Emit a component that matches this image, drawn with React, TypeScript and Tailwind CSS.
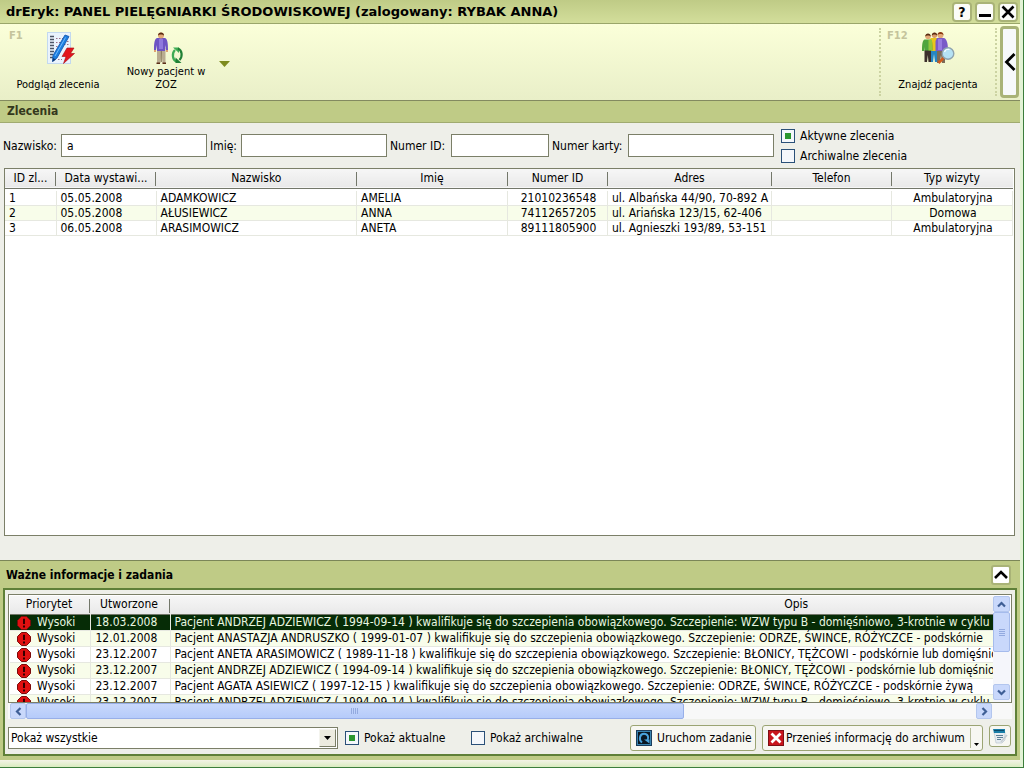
import type { ReactNode } from "react";
import { useState } from "react";

const orders = [
  { id: 1, date: "05.05.2008", last: "ADAMKOWICZ", first: "AMELIA", pesel: "21010236548", address: "ul. Albańska 44/90, 70-892 A", phone: "", visit: "Ambulatoryjna" },
  { id: 2, date: "05.05.2008", last: "AŁUSIEWICZ", first: "ANNA", pesel: "74112657205", address: "ul. Ariańska 123/15, 62-406", phone: "", visit: "Domowa" },
  { id: 3, date: "06.05.2008", last: "ARASIMOWICZ", first: "ANETA", pesel: "89111805900", address: "ul. Agnieszki 193/89, 53-151", phone: "", visit: "Ambulatoryjna" },
];

const orderColumns = [
  { label: "ID zl...", width: "w-[51px]" },
  { label: "Data wystawi...", width: "w-[100px]" },
  { label: "Nazwisko", width: "" },
  { label: "Imię", width: "w-[151px]" },
  { label: "Numer ID", width: "w-[100px]" },
  { label: "Adres", width: "w-[164px]" },
  { label: "Telefon", width: "w-[120px]" },
  { label: "Typ wizyty", width: "w-[121px]" },
];

const tasks = [
  { date: "18.03.2008", text: "Pacjent ANDRZEJ ADZIEWICZ ( 1994-09-14 ) kwalifikuje się do szczepienia obowiązkowego. Szczepienie: WZW typu B - domięśniowo, 3-krotnie w cyklu" },
  { date: "12.01.2008", text: "Pacjent ANASTAZJA ANDRUSZKO ( 1999-01-07 ) kwalifikuje się do szczepienia obowiązkowego. Szczepienie: ODRZE, ŚWINCE, RÓŻYCZCE - podskórnie" },
  { date: "23.12.2007", text: "Pacjent ANETA ARASIMOWICZ ( 1989-11-18 ) kwalifikuje się do szczepienia obowiązkowego. Szczepienie: BŁONICY, TĘŻCOWI - podskórnie lub domięśniowo" },
  { date: "23.12.2007", text: "Pacjent ANDRZEJ ADZIEWICZ ( 1994-09-14 ) kwalifikuje się do szczepienia obowiązkowego. Szczepienie: BŁONICY, TĘŻCOWI - podskórnie lub domięśniowo" },
  { date: "23.12.2007", text: "Pacjent AGATA ASIEWICZ ( 1997-12-15 ) kwalifikuje się do szczepienia obowiązkowego. Szczepienie: ODRZE, ŚWINCE, RÓŻYCZCE - podskórnie żywą" },
  { date: "23.12.2007", text: "Pacjent ANDRZEJ ADZIEWICZ ( 1994-09-14 ) kwalifikuje się do szczepienia obowiązkowego. Szczepienie: WZW typu B - domięśniowo, 3-krotnie w cyklu" },
];

function OrderIcon() {
  return (
    <svg width="34" height="32" viewBox="-6 0 34 32" aria-hidden="true">
      <rect x="0.5" y="0.5" width="23" height="31" fill="#eaf3fd" stroke="#c3d9ef" />
      <path d="M3 4.5h4M3 7.5h4M3 10.5h4M3 13.5h4M3 16.5h4M3 19.5h4M3 22.5h3M3 25.5h3" stroke="#4c5566" strokeWidth="1.4" />
      <path d="M9 6.500h7M9 10.500h5M9 14.500h4M17 12.500h5M17 9.500h5M11 27.500h4" stroke="#9a6f86" strokeDasharray="1.5 1.5" />
      <path d="M18 3l4 1.500L10 26l-4.500 3.500.5-6z" fill="#1d7fe0" stroke="#0c4fa8" strokeWidth="0.8" />
      <path d="M18.500 5.500L8 24" stroke="#7cc0ff" strokeWidth="0.9" />
      <path d="M6 26l-.5 4 3.500-2.500z" fill="#123a73" />
      <path d="M20 16h7l-3.500 5.500h4L16.500 31.500l2.500-7h-4z" fill="#e3141c" stroke="#a40a10" strokeWidth="0.6" />
    </svg>
  );
}

function NewPatientIcon() {
  return (
    <svg width="36" height="32" viewBox="-6 0 36 32" aria-hidden="true">
      <path d="M3 16h8.500v15H8.500L7.500 21l-1 10H3z" fill="#b9ac90" />
      <path d="M7.300 19v11" stroke="#857758" />
      <path d="M2.500 31.300H6M8.500 31.300H12" stroke="#5b2d18" strokeWidth="1.400" />
      <path d="M3 6h8c2.500 1 3 5 3 12h-2l-1-5v6H3v-6l-1 5H0C0 11 .5 7 3 6z" fill="#6d54c4" />
      <path d="M5 7h4v10H5z" fill="#8e78dd" />
      <path d="M0 18h2v2H0zM12 18h2v2h-2z" fill="#e0a070" />
      <circle cx="7" cy="3.500" r="3" fill="#e2a877" />
      <path d="M4 3.500C4-.5 10-.5 10 3.500 9 2 5 2 4 3.500z" fill="#5a2a12" />
      <path d="M22.500 29.500c-4-1.500-5-8-1.500-11.500" fill="none" stroke="#3dab54" strokeWidth="2.200" />
      <path d="M19 15.500h6v5.500z" fill="#3dab54" />
      <path d="M24 16.500c4 1.500 5 8 1.500 11.500" fill="none" stroke="#1f7f35" strokeWidth="2.200" />
      <path d="M27.500 31h-6v-5.500z" fill="#1f7f35" />
    </svg>
  );
}

function FindPatientIcon() {
  return (
    <svg width="33" height="32" viewBox="0 0 33 32" aria-hidden="true">
      <path d="M8 17h7l.500 13H13l-1-8-1 8H8z" fill="#2586c4" />
      <path d="M8.500 6h7c2 1 3 6 3 13H8z" fill="#e9c61c" />
      <circle cx="12.500" cy="3.300" r="2.600" fill="#d99b6a" />
      <path d="M9.800 3.500c0-4 5.400-4 5.400 0-1-1.500-4.400-1.500-5.400 0z" fill="#5a2a12" />
      <path d="M2.500 18h6.500v12H6.500l-.700-7-.800 7H2.500z" fill="#3c2f2b" />
      <path d="M2.500 7.500H9c1.500 1 1.500 5 1.500 11h-8v-3.500L2 19H0C0 12 .5 8.500 2.500 7.500z" fill="#4fa53d" />
      <path d="M6.500 8H10v10.500H6.500z" fill="#92c63d" />
      <circle cx="6" cy="4.600" r="2.700" fill="#e2a877" />
      <path d="M3.200 4.600c0-4 5.600-4 5.600 0-1-1.500-4.600-1.500-5.600 0z" fill="#5a2a12" />
      <path d="M15 17h8v14h-3l-1-8-1 8h-3z" fill="#7b6a58" />
      <path d="M15 6h7c3 1 4 6 4 12h-3v1h-9.500V9z" fill="#7a5bc8" />
      <path d="M16 7h4v11h-4z" fill="#977ce0" />
      <circle cx="18.500" cy="3.200" r="2.900" fill="#e2a877" />
      <path d="M15.500 3.200c0-4.200 6-4.200 6 0-1-1.500-5-1.500-6 0z" fill="#8a3a12" />
      <path d="M21.500 26L16.500 31" stroke="#d05a1c" strokeWidth="2.600" />
      <circle cx="26" cy="21.500" r="5.800" fill="#b5e1f4" stroke="#8fa3ae" strokeWidth="1.400" />
      <path d="M22.500 20a4 4 0 0 1 5-2.500" fill="none" stroke="#fff" strokeWidth="1.200" />
    </svg>
  );
}

function PriorityIcon() {
  return (
    <svg width="14" height="14" viewBox="0 0 14 14" aria-hidden="true">
      <path d="M4.500.5h5l4 4v5l-4 4h-5l-4-4v-5z" fill="#e01010" stroke="#7a0b0b" />
      <path d="M7 2.800v5.200" stroke="#300" strokeWidth="2" />
      <path d="M6 9.500h2v2H6z" fill="#300" />
    </svg>
  );
}

function RunIcon() {
  return (
    <svg width="16" height="16" viewBox="0 0 16 16" aria-hidden="true">
      <rect x="0.500" y="0.500" width="15" height="15" fill="#3a84b0" stroke="#1c3d5c" />
      <rect x="2" y="2" width="12" height="12" fill="#0a1722" />
      <path d="M6 12.500C2.500 10 3.500 3.800 8 3.800c4 0 5.300 4 3.200 6.700" fill="none" stroke="#4aa3dc" strokeWidth="2" />
      <path d="M8 9.500h5.500v4z" fill="#4aa3dc" />
    </svg>
  );
}

function ArchiveIcon() {
  return (
    <svg width="16" height="16" viewBox="0 0 16 16" aria-hidden="true">
      <rect x="0.500" y="0.500" width="15" height="15" fill="#c8141c" stroke="#7d0f14" />
      <path d="M3.500 3.500l9 9M12.500 3.500l-9 9" stroke="#fff" strokeWidth="2.800" />
    </svg>
  );
}

function NotesIcon() {
  return (
    <svg width="16" height="16" viewBox="0 0 16 16" aria-hidden="true">
      <path d="M2 4h11v8l-3 3H4z" fill="#e6ecf1" stroke="#b4c0ca" strokeWidth="0.600" />
      <path d="M1 1h12v4H2z" fill="#1a7ea8" />
      <path d="M2 2.500h10" stroke="#0c4b6c" />
      <path d="M4 7.500h7M5 9.500h6M5 11.500h4" stroke="#5d7f96" />
      <path d="M15 7l-6 7" stroke="#c7cdd2" strokeWidth="1.800" />
    </svg>
  );
}

function Chevron({ d }: { d: string }) {
  return (
    <svg width="9" height="9" viewBox="0 0 9 9" aria-hidden="true">
      <path d={d} fill="none" stroke="#3f5f96" strokeWidth="2.200" />
    </svg>
  );
}

function WindowButton({ label, children }: { label: string; children: ReactNode }) {
  return (
    <button
      aria-label={label}
      className="flex h-5 w-5 items-center justify-center rounded-[4px] border-2 border-[#a9b377] bg-[#fbfcf8] text-sm leading-none font-bold"
    >
      {children}
    </button>
  );
}

function ToolButton({ icon, label, hotkey, width }: { icon: ReactNode; label: string; hotkey?: string; width: string }) {
  return (
    <button className={`relative flex flex-col items-center pt-2 ${width}`}>
      {hotkey && (
        <span className="absolute top-1.5 left-1.5 font-['DejaVu_Sans'] text-[10px] leading-3 font-bold text-[#c5c49c]">{hotkey}</span>
      )}
      {icon}
      <span className="flex h-[27px] w-full items-end justify-center px-3 text-center text-[11px] leading-[13px]">{label}</span>
    </button>
  );
}

function Field({ id, label, labelWidth, inputWidth, value }: { id: string; label: string; labelWidth: string; inputWidth: string; value?: string }) {
  return (
    <div className="flex items-center">
      <label htmlFor={id} className={`whitespace-nowrap ${labelWidth}`}>{label}</label>
      <input
        id={id}
        type="text"
        defaultValue={value}
        className={`h-[23px] border border-[#7b7f68] bg-white px-[5px] outline-none ${inputWidth}`}
      />
    </div>
  );
}

function Check({ label, checked }: { label: string; checked?: boolean }) {
  return (
    <label className="flex items-center gap-[5px] whitespace-nowrap">
      <input
        type="checkbox"
        defaultChecked={checked}
        className="h-3.5 w-3.5 appearance-none border border-[#2a5078] bg-[#f4f7fb] bg-[length:6px_6px] bg-center bg-no-repeat checked:bg-[linear-gradient(#2b962f,#2b962f)]"
      />
      {label}
    </label>
  );
}

const scrollButton = "flex shrink-0 items-center justify-center rounded-[2px] border border-[#b3c6ee] bg-[#c9d8fb]";
const headCell = "relative p-0 text-center font-normal after:absolute after:top-[3px] after:right-0 after:h-[14px] after:w-px after:bg-[#73776a] last:after:hidden";

export default function App() {
  const [selected, setSelected] = useState(0);

  return (
    <div className="flex min-h-screen flex-col overflow-hidden border-r border-b border-[#3c7d3c] bg-[#e3f3d6] pr-[3px] font-['DejaVu_Sans_Condensed','Noto_Sans',sans-serif] text-xs text-black">
      {/* Title bar */}
      <header className="flex h-6 items-center justify-between border-b border-[#9aa66a] bg-gradient-to-b from-[#bfcb86] to-[#d3de9b] pr-0.5 pl-1.5">
        <h1 className="font-['DejaVu_Sans'] text-[13px] leading-5 font-bold whitespace-nowrap">drEryk: PANEL PIELĘGNIARKI ŚRODOWISKOWEJ (zalogowany: RYBAK ANNA)</h1>
        <div className="flex gap-[3px]">
          <WindowButton label="Pomoc">?</WindowButton>
          <WindowButton label="Minimalizuj">
            <span className="mt-2 h-[3px] w-3 bg-black" />
          </WindowButton>
          <WindowButton label="Zamknij">
            <svg width="14" height="14" viewBox="0 0 14 14" aria-hidden="true">
              <path d="M1.500 1.500l11 11M12.500 1.500l-11 11" stroke="#000" strokeWidth="2.600" />
            </svg>
          </WindowButton>
        </div>
      </header>

      {/* Toolbar */}
      <div className="flex h-[77px] border-b border-[#838a60] bg-gradient-to-b from-[#fbffd9] to-[#e9efc8] pr-px pl-[3px]">
        <ToolButton icon={<OrderIcon />} label="Podgląd zlecenia" hotkey="F1" width="w-[110px]" />
        <ToolButton icon={<NewPatientIcon />} label="Nowy pacjent w ZOZ" width="w-[106px]" />
        <button aria-label="Więcej" className="flex w-[11px] items-center justify-center pt-1">
          <svg width="11" height="6" viewBox="0 0 11 6" aria-hidden="true">
            <path d="M0 0h11L5.500 6z" fill="#7d8a1e" />
          </svg>
        </button>
        <div className="ml-auto flex">
          <div className="my-1 border-l-2 border-dotted border-[#ccd3a2]" />
          <ToolButton icon={<FindPatientIcon />} label="Znajdź pacjenta" hotkey="F12" width="w-[114px]" />
          <div className="my-1 mr-[3px] border-l-2 border-dotted border-[#ccd3a2]" />
          <button aria-label="Zwiń pasek" className="my-0.5 flex w-[19px] items-center justify-center rounded-[4px] border-[3px] border-[#a9b377] bg-[#f7f9fa]">
            <svg className="shrink-0" width="12" height="18" viewBox="0 0 12 18" aria-hidden="true">
              <path d="M10.500 1L2.500 9l8 8" fill="none" stroke="#000" strokeWidth="2.800" />
            </svg>
          </button>
        </div>
      </div>

      <h2 className="h-[22px] border-b border-[#a0ab70] bg-[#bfcb86] pl-[7px] leading-5 font-bold text-[#33371c]">Zlecenia</h2>

      {/* Orders */}
      <main className="flex flex-1 flex-col bg-[#eeefe9] px-1 pb-6">
        <div className="-ml-px flex h-[45px] items-center gap-[3px]">
          <Field id="last-name" label="Nazwisko:" labelWidth="w-[58px]" inputWidth="w-[146px]" value="a" />
          <Field id="first-name" label="Imię:" labelWidth="w-[31px]" inputWidth="w-[146px]" />
          <Field id="patient-id" label="Numer ID:" labelWidth="w-[61px]" inputWidth="w-[98px]" />
          <Field id="card-number" label="Numer karty:" labelWidth="w-[76px]" inputWidth="w-[146px]" />
          <div className="ml-1 flex flex-col gap-1">
            <Check label="Aktywne zlecenia" checked />
            <Check label="Archiwalne zlecenia" />
          </div>
        </div>

        <div className="mr-px flex-1 border border-[#7b7f68] bg-white pr-px">
          <table className="w-full table-fixed border-collapse">
            <thead>
              <tr className="h-[19px] border-b border-[#73776a] bg-gradient-to-b from-[#f6f6f6] to-[#e9e9e9]">
                {orderColumns.map((col) => (
                  <th key={col.label} className={`${headCell} whitespace-nowrap ${col.width}`}>{col.label}</th>
                ))}
              </tr>
            </thead>
            <tbody className="before:block before:h-0.5">
              {orders.map((o) => (
                <tr
                  key={o.id}
                  className="h-[15px] leading-[14px] even:bg-[#f8fdea] *:border-r *:border-b *:border-[#e6e8e0] *:py-0 *:pr-0.5 *:pl-1 *:whitespace-nowrap"
                >
                  <td>{o.id}</td>
                  <td>{o.date}</td>
                  <td>{o.last}</td>
                  <td>{o.first}</td>
                  <td className="text-center">{o.pesel}</td>
                  <td className="overflow-hidden">{o.address}</td>
                  <td>{o.phone}</td>
                  <td className="text-center">{o.visit}</td>
                </tr>
              ))}
            </tbody>
          </table>
        </div>
      </main>

      {/* Tasks */}
      <section className="border-t border-[#7b8658] bg-[#bfcb86] px-[3px] pb-1">
        <div className="flex h-[27px] items-center justify-between pr-1.5 pl-[3px]">
          <h2 className="font-bold">Ważne informacje i zadania</h2>
          <button aria-label="Zwiń panel" className="flex h-5 w-5 items-center justify-center rounded-[3px] border-2 border-[#a9b377] bg-white">
            <svg width="14" height="9" viewBox="0 0 14 9" aria-hidden="true">
              <path d="M1 8l6-6 6 6" fill="none" stroke="#000" strokeWidth="2.600" />
            </svg>
          </button>
        </div>

        <div className="border-2 border-[#5f8038] bg-[#eeefe9] px-[3px] pt-1 pb-[3px]">
          <div className="flex h-[109px] border border-[#7b7f68] bg-white p-px pb-0">
            <div className="min-w-0 flex-1 overflow-hidden">
              <table className="w-[1415px] table-fixed border-collapse">
                <thead>
                  <tr className="h-[18px] border-b border-[#73776a] bg-gradient-to-b from-[#f6f6f6] to-[#e9e9e9] leading-4 *:pr-0.5 *:pb-0.5">
                    <th className={`${headCell} w-20`}>Priorytet</th>
                    <th className={`${headCell} w-20`}>Utworzone</th>
                    <th className={headCell}>Opis</th>
                  </tr>
                </thead>
                <tbody>
                  {tasks.map((task, i) => (
                    <tr
                      key={i}
                      onClick={() => setSelected(i)}
                      className={`h-4 leading-[15px] *:border-r *:border-b *:border-[#e6e8e0] *:py-0 *:whitespace-nowrap ${
                        i === selected ? "bg-[#062c06] text-[#e9f7e0]" : "odd:bg-white even:bg-[#f8fdea]"
                      }`}
                    >
                      <td className="pl-[7px]">
                        <div className="flex items-center gap-1.5">
                          <PriorityIcon />
                          Wysoki
                        </div>
                      </td>
                      <td className="pl-[5px]">{task.date}</td>
                      <td className="pl-1">{task.text}</td>
                    </tr>
                  ))}
                </tbody>
              </table>
            </div>
            <div className="flex w-[17px] flex-col bg-[#f5f6fb]">
              <button aria-label="W górę" className={`${scrollButton} h-4`}>
                <Chevron d="M1 6.500l3.500-3.500 3.500 3.500" />
              </button>
              <div className="flex h-10 flex-col items-center justify-center gap-px rounded-[2px] border border-[#a5bbec] bg-[#c9d8fb]">
                <span className="h-px w-1.5 bg-[#93aadf]" />
                <span className="h-px w-1.5 bg-[#93aadf]" />
                <span className="h-px w-1.5 bg-[#93aadf]" />
                <span className="h-px w-1.5 bg-[#93aadf]" />
              </div>
              <button aria-label="W dół" className={`${scrollButton} mt-auto mb-0.5 h-4`}>
                <Chevron d="M1 2.500l3.500 3.500 3.500-3.500" />
              </button>
            </div>
          </div>

          {/* Horizontal scroll bar */}
          <div className="flex h-4 bg-[#f8f8f8] pr-5 pl-0.5">
            <button aria-label="W lewo" className={`${scrollButton} w-4`}>
              <Chevron d="M6.500 1l-3.500 3.500 3.500 3.500" />
            </button>
            <div className="flex w-[67%] items-center justify-center gap-px rounded-[2px] border border-[#98afe8] bg-gradient-to-b from-[#c9d8fb] to-[#b5cbfa]">
              <span className="h-1.5 w-px bg-[#93aadf]" />
              <span className="h-1.5 w-px bg-[#93aadf]" />
              <span className="h-1.5 w-px bg-[#93aadf]" />
              <span className="h-1.5 w-px bg-[#93aadf]" />
            </div>
            <button aria-label="W prawo" className={`${scrollButton} ml-auto w-4`}>
              <Chevron d="M2.500 1l3.500 3.500-3.500 3.500" />
            </button>
          </div>

          <div className="flex items-center pt-1.5">
            <div className="flex h-[22px] w-[330px] items-center border border-[#7b7f68] bg-white pr-px">
              <select aria-label="Filtr zadań" className="h-full flex-1 appearance-none bg-transparent pl-0.5 outline-none">
                <option>Pokaż wszystkie</option>
              </select>
              <span className="pointer-events-none flex h-[18px] w-[17px] items-center justify-center border border-t-[#f4f4ee] border-r-[#7b7f68] border-b-[#7b7f68] border-l-[#f4f4ee] bg-[#ecebdf]">
                <svg width="7" height="4" viewBox="0 0 7 4" aria-hidden="true">
                  <path d="M0 0h7L3.500 4z" />
                </svg>
              </span>
            </div>
            <div className="ml-[7px] flex gap-[25px]">
              <div className="w-[101px]">
                <Check label="Pokaż aktualne" checked />
              </div>
              <Check label="Pokaż archiwalne" />
            </div>
            <div className="ml-auto flex items-start gap-1.5 pr-px">
              <button className="flex h-[26px] w-[126px] items-center gap-[5px] rounded-[3px] border border-[#9ba473] bg-[#f7f7f2] pl-[5px] whitespace-nowrap">
                <RunIcon />
                Uruchom zadanie
              </button>
              <div className="flex h-[26px] w-[221px] rounded-[3px] border border-[#9ba473] bg-[#f7f7f2]">
                <button className="flex flex-1 items-center gap-0.5 pl-[5px] whitespace-nowrap">
                  <ArchiveIcon />
                  Przenieś informację do archiwum
                </button>
                <button aria-label="Więcej opcji" className="my-0.5 flex w-3 items-end justify-center border-l border-[#b4ba98] pb-0.5">
                  <svg width="5" height="3" viewBox="0 0 5 3" aria-hidden="true">
                    <path d="M0 0h5L2.500 3z" />
                  </svg>
                </button>
              </div>
              <button aria-label="Notatki" className="flex h-[22px] w-[22px] items-center justify-center rounded-[3px] border border-[#9ba473] bg-[#f7f7f2]">
                <NotesIcon />
              </button>
            </div>
          </div>
        </div>
      </section>
      <div className="h-[7px] bg-gradient-to-b from-[#f3f3e6] to-[#d9ecbf]" />
    </div>
  );
}
